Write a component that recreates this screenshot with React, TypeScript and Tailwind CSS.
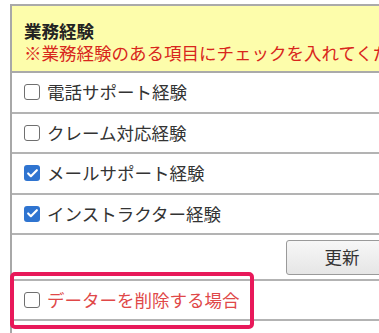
import { Check } from 'lucide-react';

const rows = [
    { label: '電話サポート経験', checked: false },
    { label: 'クレーム対応経験', checked: false },
    { label: 'メールサポート経験', checked: true },
    { label: 'インストラクター経験', checked: true },
];

function Box({ checked }: { checked: boolean }) {
    if (checked) {
        return (
            <span className="flex h-[16px] w-[16px] shrink-0 items-center justify-center rounded-[3px] bg-[#2f74d0]">
                <Check className="h-[13px] w-[13px] text-white" strokeWidth={4} />
            </span>
        );
    }
    return <span className="block h-[16px] w-[16px] shrink-0 rounded-[3px] border-[1.5px] border-[#6f6f6f] bg-white" />;
}

export default function App() {
    return (
        <div
            className="relative h-[333px] w-[379px] overflow-hidden bg-white"
            style={{ fontFamily: '"Noto Sans CJK JP", "Noto Sans", sans-serif' }}
        >
            <div className="flex h-full">
                <div className="ml-[3px] h-full w-[2px] bg-[#d0d0d0]" />
                <div className="ml-[7px] mt-[4px] w-[430px] shrink-0 border-l-2 border-[#a8a8a8]">
                    <div className="h-[69px] overflow-hidden border-y-2 border-[#aaaaaa] bg-[#fdfdab] pl-[12px] pt-[14px] text-[17.5px] leading-[22px]">
                        <div className="font-bold text-[#222]">業務経験</div>
                        <div className="whitespace-nowrap text-[#d8261c]">※業務経験のある項目にチェックを入れてください</div>
                    </div>
                    {rows.map((r) => (
                        <div key={r.label} className="flex h-[40.5px] items-center gap-[7px] border-b-2 border-[#b3b3b3] pl-[12px] text-[17.5px] text-[#333]">
                            <Box checked={r.checked} />
                            <span className="whitespace-nowrap">{r.label}</span>
                        </div>
                    ))}
                    <div className="flex h-[46px] items-center border-b-2 border-[#b3b3b3] pl-[274px]">
                        <button className="h-[35px] w-[112px] rounded-[3px] border border-[#9a9a9a] bg-gradient-to-b from-[#f7f7f7] to-[#e6e6e6] text-[17.5px] text-[#333]">
                            更新
                        </button>
                    </div>
                    <div className="flex h-[40px] items-center gap-[7px] border-b-2 border-[#b3b3b3] pl-[12px] text-[17.5px] text-[#e04848]">
                        <Box checked={false} />
                        <span className="whitespace-nowrap">データーを削除する場合</span>
                    </div>
                </div>
            </div>
            <div className="absolute left-[10px] top-[272px] h-[57px] w-[244px] rounded-[5px] border-[4px] border-[#e8195a]" />
        </div>
    );
}
